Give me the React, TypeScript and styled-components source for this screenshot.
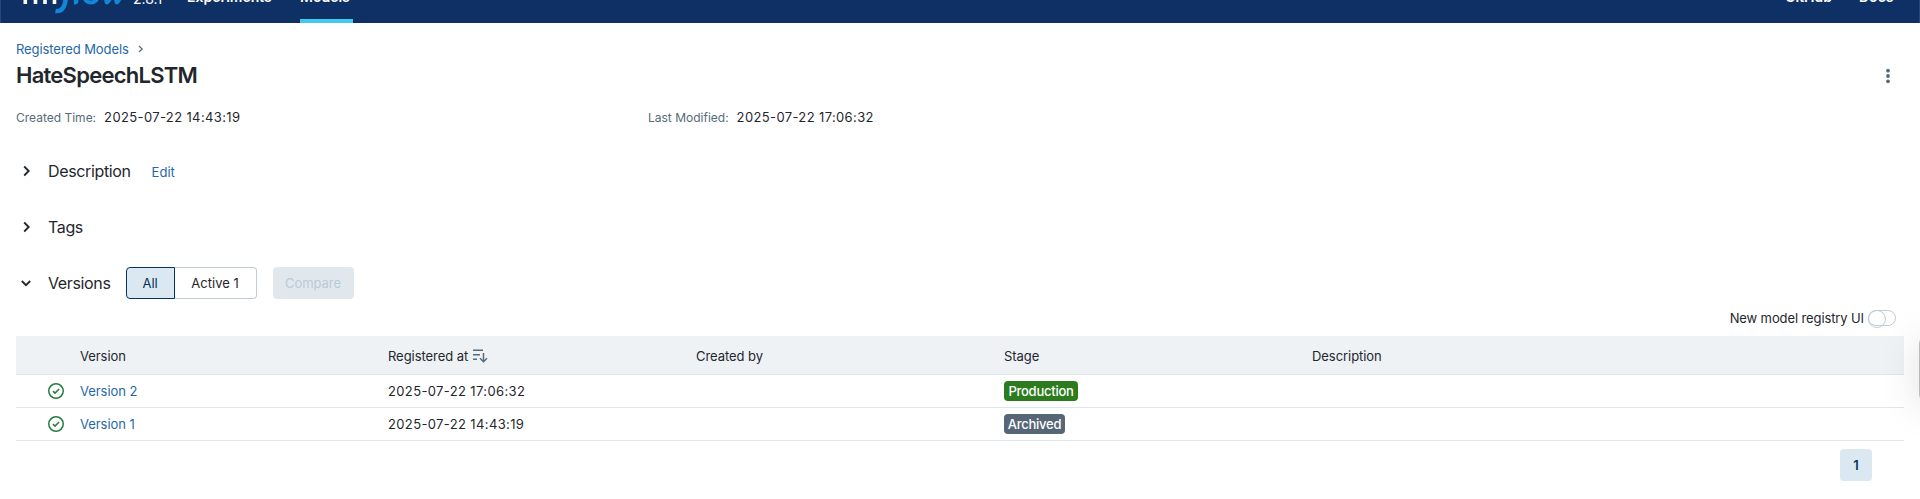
import React from "react";
import styled, { createGlobalStyle } from "styled-components";

const GlobalStyle = createGlobalStyle`
  * { box-sizing: border-box; }
  html, body { margin: 0; height: 499px; overflow: hidden; background: #fff; }
  body { font-family: Inter, "Liberation Sans", sans-serif; font-size: 13px; color: #1f272d; }
`;

const Page = styled.div`
  position: relative;
  height: 499px;
  overflow: hidden;
`;

const TopBar = styled.header`
  display: flex;
  align-items: flex-end;
  height: 23px;
  background: #0f3064;
  box-shadow: inset 1px 0 #2a4876, inset -1px 0 #2a4876;
  color: #fff;
  overflow: hidden;
`;

const Logo = styled.div`
  display: flex;
  align-items: flex-end;
  width: 110px;
  height: 60px;
  margin-left: 20px;
  flex: none;
`;

const ReleaseNumber = styled.span`
  width: 54px;
  margin-left: 3px;
  line-height: 20px;
  padding-bottom: 14px;
  font-size: 14px;
`;

const NavItem = styled.a<{ $active?: boolean; $gap: number; $w: number }>`
  flex: none;
  width: ${(p) => p.$w}px;
  margin-left: ${(p) => p.$gap}px;
  padding-bottom: ${(p) => (p.$active ? 12 : 16)}px;
  border-bottom: ${(p) => (p.$active ? "4px solid #43c9ed" : "0")};
  font-size: 14px;
  font-weight: 600;
  line-height: 20px;
  white-space: nowrap;
`;

const Spacer = styled.div`
  flex: 1;
`;

const Content = styled.main`
  padding: 0 16px;
`;

const Label = styled.span<{ $size?: number; $track?: number; $color?: string; $weight?: number }>`
  font-size: ${(p) => p.$size ?? 13}px;
  letter-spacing: ${(p) => p.$track ?? -0.06}px;
  color: ${(p) => p.$color ?? "#1f272d"};
  font-weight: ${(p) => p.$weight ?? 400};
  white-space: nowrap;
`;

const SectionTitle = styled(Label).attrs({ $size: 16, $track: -0.36 })``;

const Timestamp = styled(Label).attrs({ $track: 0.37 })``;

const EditLink = styled(Label)`
  margin: 2px 0 0 21px;
`;

const Breadcrumb = styled.nav`
  display: flex;
  align-items: center;
  gap: 9px;
  height: 20px;
  margin-top: 16px;
`;

const TitleRow = styled.div`
  display: flex;
  align-items: center;
  justify-content: space-between;
  height: 32px;
  padding-right: 13px;
`;

const MenuIcon = styled.svg`
  margin-top: 2px;
`;

const Metadata = styled.div`
  display: grid;
  grid-template-columns: 632px 1fr;
  margin-top: 16px;
  height: 20px;
  align-items: center;
`;

const MetaItem = styled.div`
  display: flex;
  align-items: center;
  gap: 8px;
`;

const Section = styled.section<{ $top: number }>`
  display: flex;
  align-items: center;
  height: 32px;
  margin-top: ${(p) => p.$top}px;
`;

const Arrow = styled.span`
  display: flex;
  width: 32px;
  padding-left: 5px;
`;

const Segments = styled.div`
  display: flex;
  height: 32px;
  margin-left: 15px;
`;

const Segment = styled.button<{ $selected?: boolean }>`
  width: ${(p) => (p.$selected ? 49 : 82)}px;
  padding: 0;
  border: 1px solid ${(p) => (p.$selected ? "#04355d" : "#c0cdd8")};
  border-left-width: ${(p) => (p.$selected ? 1 : 0)}px;
  border-radius: ${(p) => (p.$selected ? "4px 0 0 4px" : "0 4px 4px 0")};
  background: ${(p) => (p.$selected ? "#dce8f1" : "#fff")};
  font-family: inherit;
`;

const CompareButton = styled.button`
  width: 81px;
  height: 32px;
  margin-left: 16px;
  padding: 0;
  border: 0;
  border-radius: 4px;
  background: #e0e8ee;
  font-family: inherit;
`;

const ToggleRow = styled.div`
  display: flex;
  align-items: center;
  justify-content: flex-end;
  gap: 4px;
  height: 16px;
  margin-top: 11px;
  padding-right: 8px;
`;

const Switch = styled.span`
  width: 28px;
  height: 16px;
  border: 1px solid #c0cdd8;
  border-radius: 8px;
  background: #fff;

  &::before {
    content: "";
    display: block;
    width: 16px;
    height: 16px;
    margin: -1px;
    border: 1px solid #c0cdd8;
    border-radius: 50%;
  }
`;

const Table = styled.div`
  margin-top: 10px;
`;

const Row = styled.div<{ $head?: boolean }>`
  display: grid;
  grid-template-columns: 64px repeat(4, 308px) 1fr;
  align-items: center;
  height: ${(p) => (p.$head ? 39 : 33)}px;
  padding-top: ${(p) => (p.$head ? 2 : 0)}px;
  border-bottom: 1px solid #dde6ed;
  background: ${(p) => (p.$head ? "#eef2f5" : "#fff")};
`;

const Cell = styled.div`
  display: flex;
  align-items: center;
  gap: 4px;
`;

const StatusCell = styled(Cell)`
  padding-left: 32px;
`;

const Tag = styled.span<{ $bg: string; $w: number }>`
  display: flex;
  align-items: center;
  justify-content: center;
  width: ${(p) => p.$w}px;
  height: 20px;
  border-radius: 4px;
  background: ${(p) => p.$bg};
`;

const Pagination = styled.div`
  display: flex;
  justify-content: flex-end;
  margin-top: 8px;
  padding-right: 32px;
`;

const PageNumber = styled.span`
  display: flex;
  align-items: center;
  justify-content: center;
  width: 32px;
  height: 32px;
  border-radius: 4px;
  background: #dce8f1;
`;

const EdgePanel = styled.div`
  position: absolute;
  left: 1919px;
  top: 336px;
  width: 40px;
  height: 66px;
  border-radius: 8px;
  background: #bbb;
  box-shadow: 0 4px 40px rgba(0, 0, 0, 0.13);
`;

const BLUE = "#1f68ab";
const SLATE = "#566b7b";

const Chevron = ({ down }: { down?: boolean }) => (
  <svg width="12" height="12" viewBox="0 0 12 12" fill="none" stroke="#1f272d" strokeWidth="1.8">
    <path d={down ? "M0.8 4L5 8.2L9.2 4" : "M3.2 1.5L7.7 6L3.2 10.5"} />
  </svg>
);

const CheckIcon = () => (
  <svg width="16" height="16" viewBox="0 0 16 16" fill="none" stroke="#277c43" strokeWidth="1.5">
    <circle cx="8" cy="8" r="7.25" />
    <path d="M4.9 8.1L7 10.1L11.1 6" />
  </svg>
);

const SortIcon = () => (
  <svg width="16" height="16" viewBox="0 0 16 16" fill="none" stroke={SLATE} strokeWidth="1.5">
    <path d="M1 2.2H11M1 6.7H8M1 11.2H5M11.5 5V13.8M8 10.3L11.5 13.8L15 10.3" />
  </svg>
);

const versions = [
  { name: "Version 2", at: "2025-07-22 17:06:32", stage: "Production", bg: "#2c7c1f", w: 74 },
  { name: "Version 1", at: "2025-07-22 14:43:19", stage: "Archived", bg: "#566676", w: 61 },
];

export default function App() {
  return (
    <Page>
      <GlobalStyle />
      <TopBar>
        <Logo>
          <svg width="110" height="60" viewBox="0 0 110 60" fill="none">
            <path d="M5.3 41V32Q5.3 27 10 27T15.5 32V41M15.5 32Q15.5 27 20 27T25 32V41M34.5 18V41" stroke="#fff" strokeWidth="3.6" />
            <path d="M55 20Q49 19 47.5 28L45 40Q43 49 35.5 48M40 30H52M61 18L56.5 36Q55.5 39 56.5 41" stroke="#1187d8" strokeWidth="4.4" />
            <ellipse cx="71" cy="33.5" rx="6.5" ry="6" stroke="#1187d8" strokeWidth="4" />
            <path d="M85 27L87 39L95 29L97 39L105 27" stroke="#1187d8" strokeWidth="4.8" strokeLinejoin="round" />
          </svg>
        </Logo>
        <ReleaseNumber>2.8.1</ReleaseNumber>
        <NavItem $gap={0} $w={90}>Experiments</NavItem>
        <NavItem $gap={23} $w={53} $active>Models</NavItem>
        <Spacer />
        <NavItem $gap={0} $w={51}>GitHub</NavItem>
        <NavItem $gap={23} $w={61}>Docs</NavItem>
      </TopBar>
      <Content>
        <Breadcrumb>
          <Label $color={BLUE} $track={-0.1}>Registered Models</Label>
          <svg width="6" height="8" viewBox="0 0 6 8" fill="none" stroke={SLATE} strokeWidth="1.2">
            <path d="M1 1L4.2 4L1 7" />
          </svg>
        </Breadcrumb>
        <TitleRow>
          <Label $size={22} $weight={600} $track={-0.75}>HateSpeechLSTM</Label>
          <MenuIcon width="6" height="16" viewBox="0 0 6 16" fill={SLATE}>
            <circle cx="3" cy="2.7" r="1.9" />
            <circle cx="3" cy="8" r="1.9" />
            <circle cx="3" cy="13.3" r="1.9" />
          </MenuIcon>
        </TitleRow>
        <Metadata>
          <MetaItem><Label $size={12} $track={0} $color={SLATE}>Created Time:</Label><Timestamp>2025-07-22 14:43:19</Timestamp></MetaItem>
          <MetaItem><Label $size={12} $track={0} $color={SLATE}>Last Modified:</Label><Timestamp>2025-07-22 17:06:32</Timestamp></MetaItem>
        </Metadata>
        <Section $top={28}>
          <Arrow><Chevron /></Arrow>
          <SectionTitle>Description</SectionTitle>
          <EditLink $color={BLUE} $track={0}>Edit</EditLink>
        </Section>
        <Section $top={24}>
          <Arrow><Chevron /></Arrow>
          <SectionTitle>Tags</SectionTitle>
        </Section>
        <Section $top={24}>
          <Arrow><Chevron down /></Arrow>
          <SectionTitle>Versions</SectionTitle>
          <Segments>
            <Segment $selected><Label $color="#04355d">All</Label></Segment>
            <Segment><Label $track={0}>Active 1</Label></Segment>
          </Segments>
          <CompareButton><Label $color="#b9cad8">Compare</Label></CompareButton>
        </Section>
        <ToggleRow>
          <Label $track={-0.11}>New model registry UI</Label>
          <Switch />
        </ToggleRow>
        <Table>
          <Row $head>
            <Cell />
            <Cell><Label>Version</Label></Cell>
            <Cell><Label>Registered at</Label><SortIcon /></Cell>
            <Cell><Label>Created by</Label></Cell>
            <Cell><Label>Stage</Label></Cell>
            <Cell><Label>Description</Label></Cell>
          </Row>
          {versions.map((v) => (
            <Row key={v.name}>
              <StatusCell><CheckIcon /></StatusCell>
              <Cell><Label $color={BLUE}>{v.name}</Label></Cell>
              <Cell><Timestamp>{v.at}</Timestamp></Cell>
              <Cell />
              <Cell><Tag $bg={v.bg} $w={v.w}><Label $color="#fff" $weight={500} $track={-0.25}>{v.stage}</Label></Tag></Cell>
              <Cell />
            </Row>
          ))}
        </Table>
        <Pagination>
          <PageNumber><Label $color="#04355d" $weight={600}>1</Label></PageNumber>
        </Pagination>
      </Content>
      <EdgePanel />
    </Page>
  );
}
